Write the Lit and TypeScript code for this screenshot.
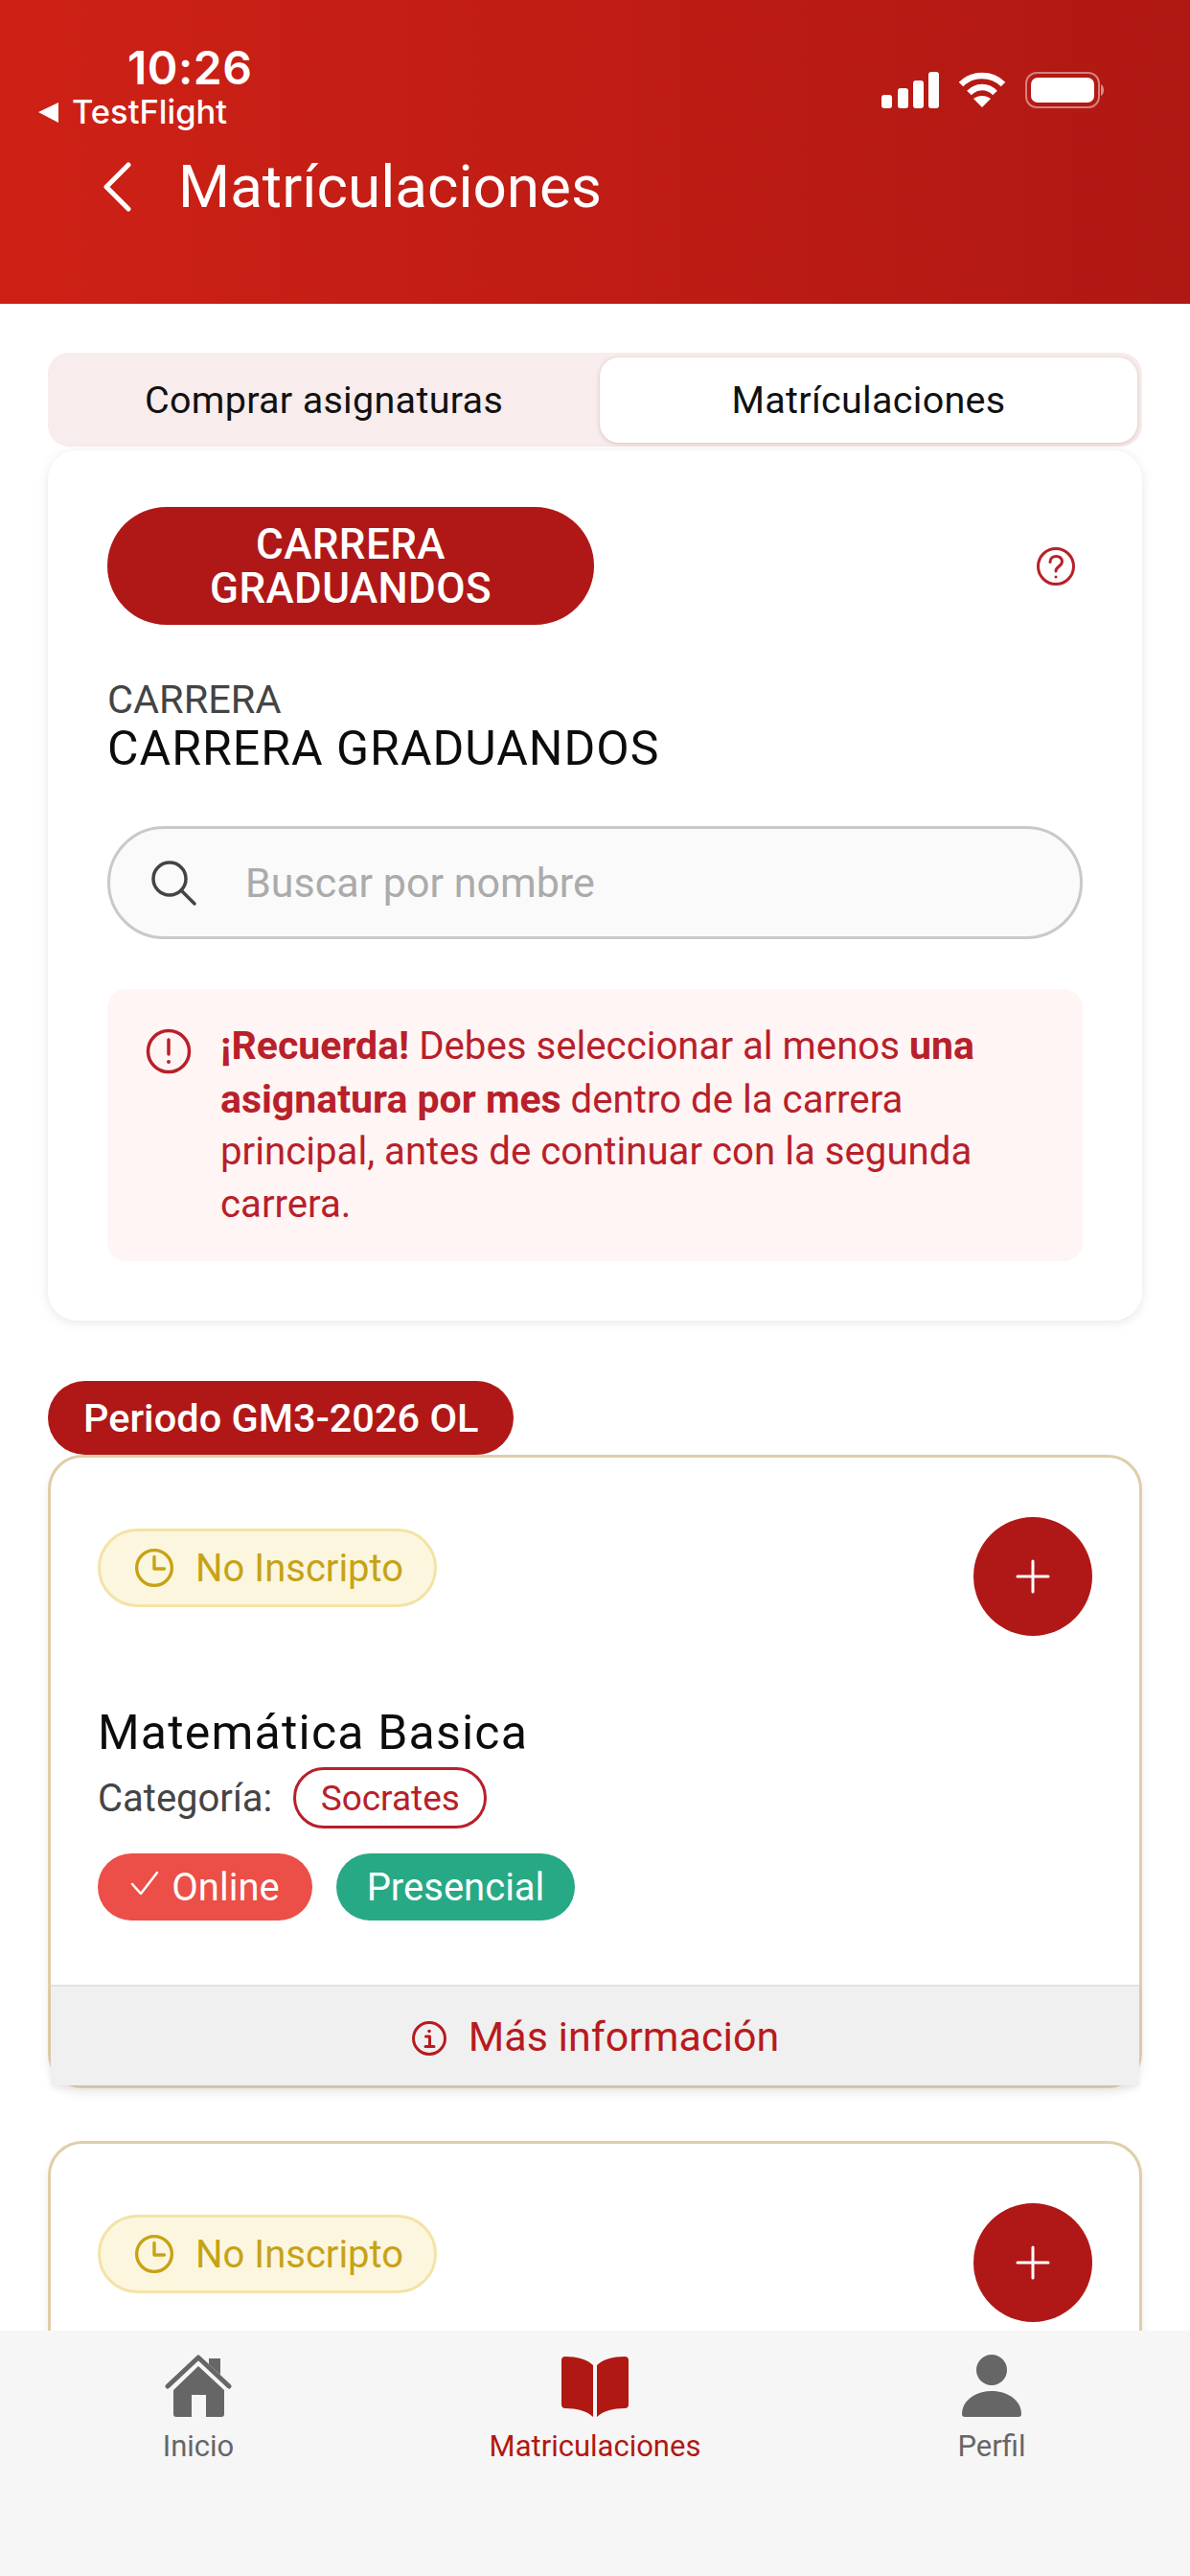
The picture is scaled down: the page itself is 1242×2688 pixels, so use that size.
import { LitElement, html, css } from "lit";
import { customElement } from "lit/decorators.js";

const clock = html`<svg class="clock" viewBox="0 0 40 40" fill="none" stroke="currentColor" stroke-width="3.2" stroke-linecap="round" stroke-linejoin="round"><circle cx="20" cy="20" r="17.5"/><path d="M20 9v12h10"/></svg>`;
const plus = html`<svg class="plus" viewBox="0 0 36 36" fill="none" stroke="#fff" stroke-width="3" stroke-linecap="round"><path d="M18 2v32M2 18h32"/></svg>`;

const statusRow = html`<div class="top">
  <div class="status">${clock}<span>No Inscripto</span></div>
  <div class="add">${plus}</div>
</div>`;

@customElement("app-root")
export class AppRoot extends LitElement {
  static styles = css`
    :host { display: block; width: 1242px; height: 2688px; overflow: hidden; font-family: Roboto, "Liberation Sans", sans-serif; background: #fff; }
    .page { display: flex; flex-direction: column; height: 2688px; }
    header { height: 317px; flex: none; background: linear-gradient(90deg, #CE2116 0%, #B01813 100%); color: #fff; box-sizing: border-box; }
    .sb { display: flex; justify-content: space-between; height: 146px; box-sizing: border-box; padding: 45px 90px 0 39px; }
    .sb-left { display: flex; flex-direction: column; }
    .time { font: 600 48px/52px Inter, sans-serif; margin-left: 94px; letter-spacing: 0.5px; }
    .back { display: flex; align-items: center; gap: 13px; font: 500 34.5px/36px Inter, sans-serif; margin-top: 2px; }
    .sb-right { display: flex; align-items: flex-start; gap: 20px; padding-top: 30px; }
    .sb-right svg { display: block; }
    .nav { display: flex; align-items: center; padding-left: 107px; gap: 49px; height: 98px; }
    .nav svg { width: 30px; height: 52px; flex: none; }
    .nav span { font: 400 62px/70px Roboto, sans-serif; }
    main { flex: 1; min-height: 0; overflow: hidden; padding: 51px 50px 0; box-sizing: border-box; display: flex; flex-direction: column; }
    .tabs { flex: none; display: flex; height: 98px; background: #F8ECEC; border-radius: 22px; box-sizing: border-box; padding: 5px 5px 4px 0; }
    .tab { width: 576px; display: flex; align-items: center; justify-content: center; font-size: 39.5px; color: #111; letter-spacing: 0.3px; }
    .tab.active { flex: 1; width: auto; background: #fff; border-radius: 20px; box-shadow: 0 1px 4px rgba(150,90,90,.3); }
    .panel { flex: none; margin-top: 4px; height: 908px; box-sizing: border-box; padding: 59px 62px 0; background: #fff; border-radius: 30px; box-shadow: 0 2px 12px rgba(0,0,0,.1); }
    .panel-top { display: flex; justify-content: space-between; align-items: center; }
    .career { width: 508px; height: 123px; border-radius: 62px; background: #B01818; color: #fff; font-size: 44px; font-weight: 500; line-height: 46px; display: flex; align-items: center; justify-content: center; text-align: center; letter-spacing: .4px; }
    .help { width: 42px; height: 42px; margin-right: 7px; color: #B8202A; }
    .lab { font-size: 41.5px; line-height: 44px; color: #444; margin-top: 56px; }
    .val { font-size: 50px; line-height: 56px; color: #0c0c0c; letter-spacing: 1px; margin-top: 1px; }
    .search { margin-top: 53px; height: 118px; border: 3px solid #c9c9c9; border-radius: 59px; background: #FAFAFA; box-sizing: border-box; display: flex; align-items: center; padding-left: 41px; gap: 50px; color: #ABABAB; font-size: 43px; }
    .search svg { width: 50px; height: 50px; flex: none; }
    .alert { margin-top: 52px; height: 284px; box-sizing: border-box; background: #FFF5F4; border-radius: 20px; padding: 32px 40px 0 40px; display: flex; gap: 30px; color: #B8202A; font-size: 40.2px; line-height: 54.5px; }
    .alert svg { width: 48px; height: 48px; flex: none; margin-top: 9px; }
    .alert b { font-weight: 700; font-size: 41px; }
    .period { flex: none; align-self: flex-start; margin-top: 63px; height: 77px; display: flex; align-items: center; padding: 0 37px; border-radius: 39px; background: #B01818; color: #fff; font-size: 41.5px; font-weight: 500; }
    .card { flex: none; box-sizing: border-box; border: 3px solid #DFCEA8; border-radius: 36px; background: #fff; box-shadow: 0 6px 12px rgba(0,0,0,.07); }
    .first { height: 661px; }
    .body { padding: 62px 49px 0; height: 550px; box-sizing: border-box; }
    .top { display: flex; justify-content: space-between; align-items: flex-start; }
    .status { margin-top: 12px; height: 82px; width: 354px; box-sizing: border-box; border: 3px solid #F3E3A6; border-radius: 41px; background: #FDF6DF; color: #C6A315; display: flex; align-items: center; padding-left: 35px; gap: 22px; font-size: 40px; }
    .clock { width: 42px; height: 42px; flex: none; }
    .add { width: 124px; height: 124px; border-radius: 50%; background: #B01818; display: flex; align-items: center; justify-content: center; }
    .plus { width: 36px; height: 36px; }
    .title { font-size: 50px; line-height: 60px; color: #0c0c0c; letter-spacing: 1.2px; margin-top: 71px; }
    .cat { display: flex; align-items: center; gap: 22px; font-size: 40px; color: #444; margin-top: 6px; }
    .chip { height: 64px; width: 202px; box-sizing: border-box; border: 3px solid #B8202A; border-radius: 32px; color: #B8202A; display: flex; align-items: center; justify-content: center; font-size: 37px; }
    .modes { display: flex; gap: 25px; margin-top: 26px; }
    .mode { height: 70px; border-radius: 35px; color: #fff; display: flex; align-items: center; justify-content: center; font-size: 40px; box-sizing: border-box; gap: 13px; }
    .online { width: 224px; background: #EB4F47; }
    .online svg { width: 30px; height: 26px; margin-top: -8px; }
    .pres { width: 249px; background: #27A985; }
    .more { height: 105px; background: #F0F0F0; border-top: 2px solid #E2E2E2; box-sizing: border-box; box-shadow: 0 4px 6px rgba(0,0,0,.06); display: flex; align-items: center; justify-content: center; gap: 22px; color: #B81A1E; font-size: 43px; }
    .more svg { width: 38px; height: 38px; margin-top: 4px; }
    .second { margin-top: 55px; height: 400px; }
    nav { flex: none; height: 256px; background: #F6F6F6; position: relative; z-index: 1; display: flex; align-items: flex-start; justify-content: center; }
    .item { width: 414px; margin-top: 25px; display: flex; flex-direction: column; align-items: center; color: #666; font-size: 31px; }
    .item svg { display: block; height: 66px; }
    .item span { margin-top: 12px; line-height: 36px; }
    .item.on { color: #B01813; }
  `;

  render() {
    return html`<div class="page">
      <header>
        <div class="sb">
          <div class="sb-left">
            <div class="time">10:26</div>
            <div class="back">
              <svg width="23" height="22" viewBox="0 0 23 22"><path d="M1 11 22 1v21z" fill="#fff"/></svg>
              <span>TestFlight</span>
            </div>
          </div>
          <div class="sb-right">
            <svg width="60" height="38" viewBox="0 0 60 38" fill="#fff"><rect x="0" y="24" width="11" height="14" rx="3"/><rect x="17" y="17" width="11" height="21" rx="3"/><rect x="33" y="9" width="11" height="29" rx="3"/><rect x="49" y="0" width="11" height="38" rx="3"/></svg>
            <svg width="50" height="38" viewBox="0 0 50 38" fill="none" stroke="#fff" stroke-width="6.5"><path d="M3 13C15 1 35 1 47 13"/><path d="M11.5 22C19 14 31 14 38.5 22"/><path d="M25 37 16 28C21 24 29 24 34 28z" fill="#fff" stroke="none"/></svg>
            <svg width="82" height="38" viewBox="0 0 82 38"><rect x="1" y="1" width="76" height="36" rx="11" fill="none" stroke="#fff" stroke-opacity=".45" stroke-width="2"/><rect x="6" y="6" width="66" height="26" rx="7" fill="#fff"/><path d="M79 13c2 1 3 3 3 6s-1 5-3 6z" fill="#fff" fill-opacity=".5"/></svg>
          </div>
        </div>
        <div class="nav">
          <svg viewBox="0 0 30 52" fill="none" stroke="#fff" stroke-width="5" stroke-linecap="round" stroke-linejoin="round"><path d="M27 3 4 26l23 23"/></svg>
          <span>Matrículaciones</span>
        </div>
      </header>
      <main>
        <div class="tabs">
          <div class="tab">Comprar asignaturas</div>
          <div class="tab active">Matrículaciones</div>
        </div>
        <section class="panel">
          <div class="panel-top">
            <div class="career">CARRERA<br />GRADUANDOS</div>
            <svg class="help" viewBox="0 0 42 42" fill="none" stroke="currentColor" stroke-width="3" stroke-linecap="round"><circle cx="21" cy="21" r="18.5"/><path d="M15 16.5c0-8 12.5-8 12.5-.5 0 5-6.500 5-6.500 10"/><circle cx="21" cy="32" r="1.5" fill="currentColor" stroke="none"/></svg>
          </div>
          <div class="lab">CARRERA</div>
          <div class="val">CARRERA GRADUANDOS</div>
          <div class="search">
            <svg viewBox="0 0 50 50" fill="none" stroke="#444" stroke-width="3.5" stroke-linecap="round"><circle cx="21" cy="21" r="17"/><path d="m33 33 14 14"/></svg>
            <span>Buscar por nombre</span>
          </div>
          <div class="alert">
            <svg viewBox="0 0 48 48" fill="none" stroke="currentColor" stroke-width="3.5" stroke-linecap="round"><circle cx="24" cy="24" r="21.5"/><path d="M24 12v15"/><circle cx="24" cy="35" r="2" fill="currentColor" stroke="none"/></svg>
            <div><b>¡Recuerda!</b> Debes seleccionar al menos <b>una asignatura por mes</b> dentro de la carrera principal, antes de continuar con la segunda carrera.</div>
          </div>
        </section>
        <div class="period">Periodo GM3-2026 OL</div>
        <article class="card first">
          <div class="body">
            ${statusRow}
            <div class="title">Matemática Basica</div>
            <div class="cat"><span>Categoría:</span><span class="chip">Socrates</span></div>
            <div class="modes">
              <div class="mode online"><svg viewBox="0 0 30 26" fill="none" stroke="#fff" stroke-width="2.5" stroke-linecap="round" stroke-linejoin="round"><path d="m2 14 9 10L28 2"/></svg><span>Online</span></div>
              <div class="mode pres">Presencial</div>
            </div>
          </div>
          <div class="more">
            <svg viewBox="0 0 38 38" fill="none" stroke="currentColor" stroke-width="3" stroke-linecap="round" stroke-linejoin="round"><circle cx="19" cy="19" r="16.5"/><path d="M15.5 17H19.5V27M15 27.5h9"/><circle cx="19" cy="11.5" r="1.8" fill="currentColor" stroke="none"/></svg>
            <span>Más información</span>
          </div>
        </article>
        <article class="card second">
          <div class="body">${statusRow}</div>
        </article>
      </main>
      <nav>
        <div class="item">
          <svg width="70" viewBox="0 0 70 66" fill="#666">
            <path d="M46 4h12v17L46 10z"/>
            <path d="M3 33 35 3l32 30" fill="none" stroke="#666" stroke-width="5" stroke-linecap="round" stroke-linejoin="round"/>
            <path d="M35 12 62 37v25a3 3 0 0 1-3 3H43V42H28v23H12a3 3 0 0 1-3-3V37z"/>
          </svg>
          <span>Inicio</span>
        </div>
        <div class="item on">
          <svg width="70" viewBox="0 0 70 66" fill="#B01813">
            <path d="M4 2c12 0 23 3 29 9v54c-6-6-17-9-29-9a4 4 0 0 1-4-4V6a4 4 0 0 1 4-4z"/>
            <path d="M66 2c-12 0-23 3-29 9v54c6-6 17-9 29-9a4 4 0 0 0 4-4V6a4 4 0 0 0-4-4z"/>
          </svg>
          <span>Matriculaciones</span>
        </div>
        <div class="item">
          <svg width="62" viewBox="0 0 62 66" fill="#666">
            <ellipse cx="31" cy="16" rx="16" ry="16"/>
            <path d="M0 62C0 48 14 38 31 38s31 10 31 24a3 3 0 0 1-3 3H3a3 3 0 0 1-3-3z"/>
          </svg>
          <span>Perfil</span>
        </div>
      </nav>
    </div>`;
  }
}
